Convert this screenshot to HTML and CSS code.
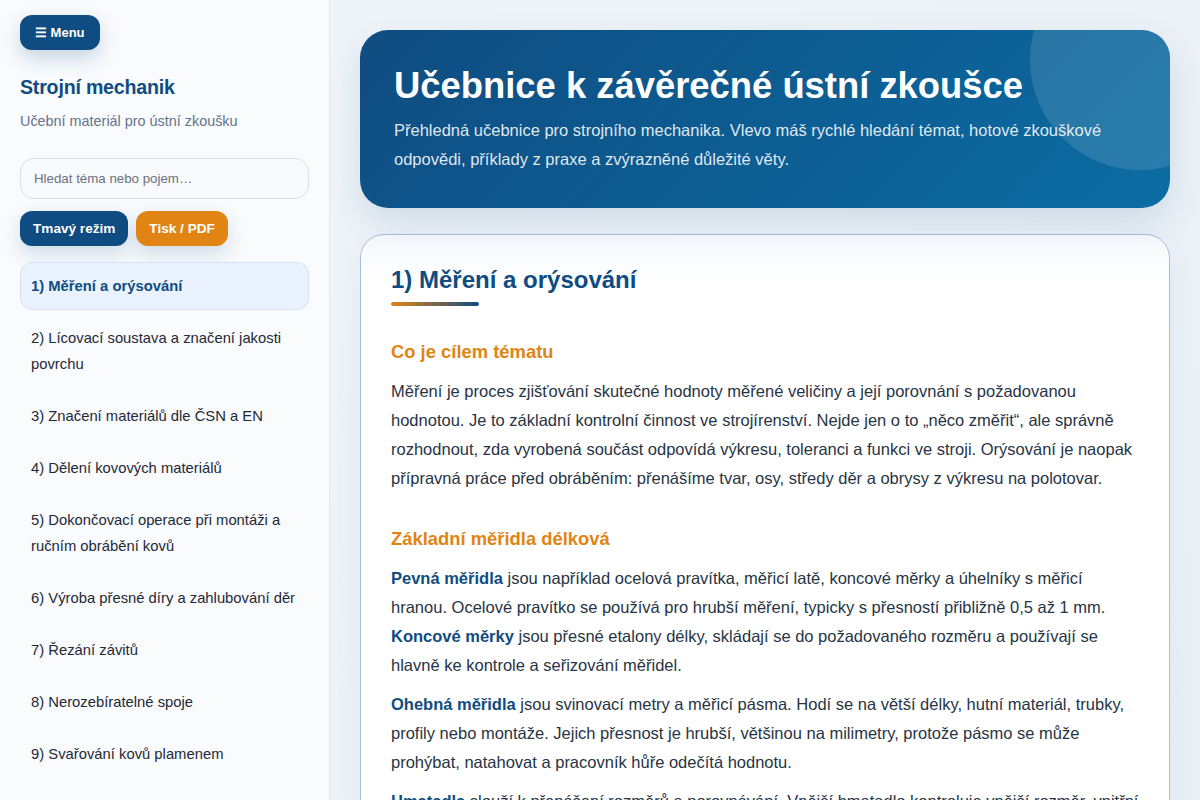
FILE: index.html
```html
<!DOCTYPE html>
<html lang="cs">
<head>
    <meta charset="UTF-8">
    <meta name="viewport" content="width=device-width, initial-scale=1.0">
    <title>Strojní mechanik - učebnice</title>
    <link rel="stylesheet" href="styles.css">
</head>
<body>
    <div class="layout">
        <aside class="sidebar">
            <button class="menu-btn">☰ Menu</button>
            <h2 class="brand">Strojní mechanik</h2>
            <p class="brand-sub">Učební materiál pro ústní zkoušku</p>
            <input type="search" class="search" placeholder="Hledat téma nebo pojem…">
            <div class="tools">
                <button class="btn btn-dark">Tmavý režim</button>
                <button class="btn btn-orange">Tisk / PDF</button>
            </div>
            <nav class="topics">
                <a href="#t1" class="active">1) Měření a orýsování</a>
                <a href="#t2">2) Lícovací soustava a značení jakosti povrchu</a>
                <a href="#t3">3) Značení materiálů dle ČSN a EN</a>
                <a href="#t4">4) Dělení kovových materiálů</a>
                <a href="#t5">5) Dokončovací operace při montáži a ručním obrábění kovů</a>
                <a href="#t6">6) Výroba přesné díry a zahlubování děr</a>
                <a href="#t7">7) Řezání závitů</a>
                <a href="#t8">8) Nerozebíratelné spoje</a>
                <a href="#t9">9) Svařování kovů plamenem</a>
            </nav>
        </aside>

        <main class="content">
            <header class="hero">
                <h1>Učebnice k závěrečné ústní zkoušce</h1>
                <p>Přehledná učebnice pro strojního mechanika. Vlevo máš rychlé hledání témat, hotové zkouškové odpovědi, příklady z praxe a zvýrazněné důležité věty.</p>
            </header>

            <section class="topic" id="t1">
                <h2>1) Měření a orýsování</h2>

                <h3>Co je cílem tématu</h3>
                <p>Měření je proces zjišťování skutečné hodnoty měřené veličiny a její porovnání s požadovanou hodnotou. Je to základní kontrolní činnost ve strojírenství. Nejde jen o to „něco změřit“, ale správně rozhodnout, zda vyrobená součást odpovídá výkresu, toleranci a funkci ve stroji. Orýsování je naopak přípravná práce před obráběním: přenášíme tvar, osy, středy děr a obrysy z výkresu na polotovar.</p>

                <h3>Základní měřidla délková</h3>
                <p><strong>Pevná měřidla</strong> jsou například ocelová pravítka, měřicí latě, koncové měrky a úhelníky s měřicí hranou. Ocelové pravítko se používá pro hrubší měření, typicky s přesností přibližně 0,5 až 1 mm. <strong>Koncové měrky</strong> jsou přesné etalony délky, skládají se do požadovaného rozměru a používají se hlavně ke kontrole a seřizování měřidel.</p>
                <p><strong>Ohebná měřidla</strong> jsou svinovací metry a měřicí pásma. Hodí se na větší délky, hutní materiál, trubky, profily nebo montáže. Jejich přesnost je hrubší, většinou na milimetry, protože pásmo se může prohýbat, natahovat a pracovník hůře odečítá hodnotu.</p>
                <p><strong>Hmatadla</strong> slouží k přenášení rozměrů a porovnávání. Vnější hmatadlo kontroluje vnější rozměr, vnitřní hmatadlo vnitřní rozměr. Samotné hmatadlo rozměr neukazuje, ten se odečte na měřidle.</p>
            </section>
        </main>
    </div>
</body>
</html>
```

FILE: styles.css
```css
* {
    box-sizing: border-box;
}
body {
    margin: 0;
    font-family: "Liberation Sans", Arial, sans-serif;
    color: #273444;
    background: linear-gradient(135deg, #f1f5f9 0%, #e9eff6 100%);
}
.layout {
    display: grid;
    grid-template-columns: 330px 1fr;
    min-height: 100vh;
}
.sidebar {
    position: sticky;
    top: 0;
    height: 100vh;
    overflow: hidden;
    padding: 15px 20px;
    background: #f9fbfd;
    border-right: 1px solid #e1e7ef;
}
.menu-btn {
    height: 35px;
    padding: 0 15px;
    border: none;
    border-radius: 12px;
    background: #0f4c81;
    color: #fff;
    font: bold 13px "Liberation Sans", Arial, sans-serif;
    box-shadow: 0 8px 20px rgba(15, 76, 129, 0.22);
    cursor: pointer;
}
.brand {
    margin: 24px 0 0;
    font-size: 19.6px;
    line-height: 26px;
    color: #0f4c81;
    letter-spacing: -0.2px;
}
.brand-sub {
    margin: 9px 0 0;
    font-size: 14.4px;
    line-height: 24px;
    color: #64748b;
}
.search {
    display: block;
    width: 100%;
    height: 41px;
    margin-top: 25px;
    padding: 0 13px;
    border: 1px solid #d8e1eb;
    border-radius: 14px;
    background: #f8fafc;
    font: 13.3px "Liberation Sans", Arial, sans-serif;
    color: #273444;
    outline: none;
}
.search::placeholder {
    color: #6b7280;
}
.tools {
    display: flex;
    gap: 8px;
    margin-top: 12px;
}
.btn {
    height: 35px;
    padding: 0 13px;
    border: none;
    border-radius: 12px;
    color: #fff;
    font: bold 13.6px "Liberation Sans", Arial, sans-serif;
    cursor: pointer;
    box-shadow: 0 8px 20px rgba(15, 76, 129, 0.18);
}
.btn-dark {
    background: #0f4c81;
}
.btn-orange {
    background: #e08414;
}
.topics {
    display: flex;
    flex-direction: column;
    gap: 4px;
    margin-top: 16px;
}
.topics a {
    display: block;
    padding: 10px;
    border: 1px solid transparent;
    border-radius: 12px;
    font-size: 14.8px;
    line-height: 26px;
    color: #1f2937;
    text-decoration: none;
}
.topics a.active {
    background: #eaf2fd;
    border-color: #d3e2f4;
    color: #0f4c81;
    font-weight: bold;
}
.content {
    padding: 30px;
    min-width: 0;
}
.hero {
    position: relative;
    overflow: hidden;
    padding: 34px;
    border-radius: 28px;
    background: linear-gradient(135deg, #0f4c81 0%, #0b6da3 100%);
    color: #fff;
    box-shadow: 0 14px 34px rgba(15, 76, 129, 0.14);
}
.hero::after {
    content: "";
    position: absolute;
    top: -80px;
    right: -80px;
    width: 220px;
    height: 220px;
    border-radius: 50%;
    background: rgba(255, 255, 255, 0.12);
}
.hero h1 {
    margin: 0 0 8px;
    font-size: 36.4px;
    line-height: 44px;
}
.hero p {
    margin: 0;
    font-size: 16.5px;
    line-height: 29px;
    color: rgba(255, 255, 255, 0.88);
}
.topic {
    margin-top: 26px;
    padding: 28px 30px 30px;
    border: 1px solid #a9bed5;
    border-radius: 24px;
    background: linear-gradient(180deg, #f6f9fc 0, #ffffff 50px);
    box-shadow: 0 10px 30px rgba(15, 76, 129, 0.06);
}
.topic h2 {
    margin: 0;
    font-size: 24px;
    line-height: 33px;
    color: #0f4c81;
}
.topic h2::after {
    content: "";
    display: block;
    width: 88px;
    height: 4px;
    margin-top: 6px;
    border-radius: 4px;
    background: linear-gradient(90deg, #e08414, #0f4c81);
}
.topic h3 {
    margin: 33px 0 13px;
    font-size: 18.4px;
    line-height: 25px;
    color: #e08414;
}
.topic p {
    margin: 0 0 10px;
    font-size: 16.5px;
    line-height: 29px;
}
.topic strong {
    color: #0f4c81;
}
```
